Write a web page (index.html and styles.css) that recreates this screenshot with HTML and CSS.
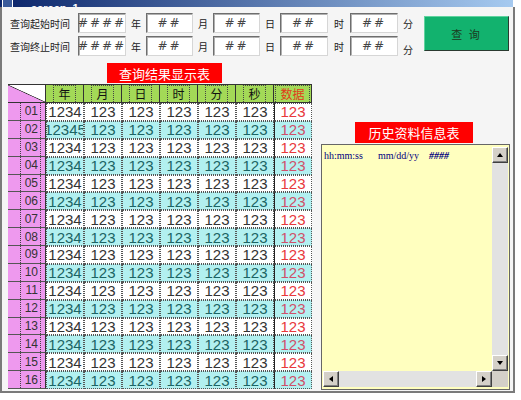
FILE: index.html
```html
<!DOCTYPE html>
<html>
<head>
<meta charset="utf-8">
<link rel="stylesheet" href="styles.css">
</head>
<body>
<div class="titlebar"><span class="ticon"></span><span class="ttext">screen_1</span></div>
<div class="window">
  <div class="top">
    <div class="form">
      <div class="frow"><span class="lbl">查询起始时间</span><span class="inp w48">####</span><span class="unit">年</span><span class="inp w47">##</span><span class="unit">月</span><span class="inp w47">##</span><span class="unit">日</span><span class="inp w48">##</span><span class="unit u22">时</span><span class="inp w48">##</span><span class="unit">分</span></div>
      <div class="frow"><span class="lbl">查询终止时间</span><span class="inp w48">####</span><span class="unit">年</span><span class="inp w47">##</span><span class="unit">月</span><span class="inp w47">##</span><span class="unit">日</span><span class="inp w48">##</span><span class="unit u22">时</span><span class="inp w48">##</span><span class="unit low">分</span></div>
    </div>
    <div class="btn">查&nbsp;询</div>
  </div>
  <div class="main">
    <div class="left">
      <div class="redlbl t1">查询结果显示表</div>
      <div class="grid">
        <div class="corner"></div><div class="h"><span>年</span></div><div class="h"><span>月</span></div><div class="h"><span>日</span></div><div class="h"><span>时</span></div><div class="h"><span>分</span></div><div class="h"><span>秒</span></div><div class="h d"><span>数据</span></div>
        <div class="row"><div class="rh"><span>01</span></div><div class="c">1234</div><div class="c">123</div><div class="c">123</div><div class="c">123</div><div class="c">123</div><div class="c">123</div><div class="c d">123</div></div>
        <div class="row even"><div class="rh"><span>02</span></div><div class="c">12345</div><div class="c">123</div><div class="c">123</div><div class="c">123</div><div class="c">123</div><div class="c">123</div><div class="c d">123</div></div>
        <div class="row"><div class="rh"><span>03</span></div><div class="c">1234</div><div class="c">123</div><div class="c">123</div><div class="c">123</div><div class="c">123</div><div class="c">123</div><div class="c d">123</div></div>
        <div class="row even"><div class="rh"><span>04</span></div><div class="c">1234</div><div class="c">123</div><div class="c">123</div><div class="c">123</div><div class="c">123</div><div class="c">123</div><div class="c d">123</div></div>
        <div class="row"><div class="rh"><span>05</span></div><div class="c">1234</div><div class="c">123</div><div class="c">123</div><div class="c">123</div><div class="c">123</div><div class="c">123</div><div class="c d">123</div></div>
        <div class="row even"><div class="rh"><span>06</span></div><div class="c">1234</div><div class="c">123</div><div class="c">123</div><div class="c">123</div><div class="c">123</div><div class="c">123</div><div class="c d">123</div></div>
        <div class="row"><div class="rh"><span>07</span></div><div class="c">1234</div><div class="c">123</div><div class="c">123</div><div class="c">123</div><div class="c">123</div><div class="c">123</div><div class="c d">123</div></div>
        <div class="row even"><div class="rh"><span>08</span></div><div class="c">1234</div><div class="c">123</div><div class="c">123</div><div class="c">123</div><div class="c">123</div><div class="c">123</div><div class="c d">123</div></div>
        <div class="row"><div class="rh"><span>09</span></div><div class="c">1234</div><div class="c">123</div><div class="c">123</div><div class="c">123</div><div class="c">123</div><div class="c">123</div><div class="c d">123</div></div>
        <div class="row even"><div class="rh"><span>10</span></div><div class="c">1234</div><div class="c">123</div><div class="c">123</div><div class="c">123</div><div class="c">123</div><div class="c">123</div><div class="c d">123</div></div>
        <div class="row"><div class="rh"><span>11</span></div><div class="c">1234</div><div class="c">123</div><div class="c">123</div><div class="c">123</div><div class="c">123</div><div class="c">123</div><div class="c d">123</div></div>
        <div class="row even"><div class="rh"><span>12</span></div><div class="c">1234</div><div class="c">123</div><div class="c">123</div><div class="c">123</div><div class="c">123</div><div class="c">123</div><div class="c d">123</div></div>
        <div class="row"><div class="rh"><span>13</span></div><div class="c">1234</div><div class="c">123</div><div class="c">123</div><div class="c">123</div><div class="c">123</div><div class="c">123</div><div class="c d">123</div></div>
        <div class="row even"><div class="rh"><span>14</span></div><div class="c">1234</div><div class="c">123</div><div class="c">123</div><div class="c">123</div><div class="c">123</div><div class="c">123</div><div class="c d">123</div></div>
        <div class="row"><div class="rh"><span>15</span></div><div class="c">1234</div><div class="c">123</div><div class="c">123</div><div class="c">123</div><div class="c">123</div><div class="c">123</div><div class="c d">123</div></div>
        <div class="row even"><div class="rh"><span>16</span></div><div class="c">1234</div><div class="c">123</div><div class="c">123</div><div class="c">123</div><div class="c">123</div><div class="c">123</div><div class="c d">123</div></div>
      </div>
    </div>
    <div class="right">
      <div class="redlbl t2">历史资料信息表</div>
      <div class="hist">
        <div class="htext"><span class="s1">hh:mm:ss</span><span class="s2">mm/dd/yy</span><span class="s3">####</span></div>
        <div class="vbar"><div class="sbtn"><i class="ar up"></i></div><div class="track"></div><div class="sbtn"><i class="ar down"></i></div></div>
        <div class="hbar"><div class="sbtn"><i class="ar lf"></i></div><div class="track"></div><div class="sbtn"><i class="ar rt"></i></div></div>
        <div class="scorner"></div>
      </div>
    </div>
  </div>
</div>
</body>
</html>
```
FILE: styles.css
```css
html, body {
  margin: 0;
  padding: 0;
  background: #ffffff;
}
body {
  width: 521px;
  height: 400px;
  overflow: hidden;
  font-family: "Noto Sans CJK SC", "Liberation Sans", sans-serif;
}
.titlebar {
  width: 513px;
  height: 7px;
  background: linear-gradient(to right, #0a246a, #a6caf0);
  display: flex;
  align-items: flex-end;
  overflow: hidden;
}
.ticon {
  width: 9px;
  height: 12px;
  margin-left: 2px;
  margin-bottom: -6px;
  flex: none;
  border: 1px solid #ffffff;
  background: #3a5a9a;
}
.ttext {
  margin-left: 18px;
  margin-bottom: -7px;
  font: bold 11px/12px "Liberation Sans", sans-serif;
  color: #ffffff;
  flex: none;
}
.window {
  width: 511px;
  height: 384px;
  border-left: 2px solid #7a7a7a;
  border-right: 2px solid #7a7a7a;
  border-bottom: 2px solid #7a7a7a;
  background: #f5f5f5;
}
.top {
  display: flex;
  padding: 6px 0 0 8px;
}
.form {
  display: flex;
  flex-direction: column;
  gap: 3px;
}
.frow {
  display: flex;
  align-items: center;
  height: 20px;
}
.lbl {
  width: 68px;
  font-size: 10px;
  color: #222;
}
.inp {
  box-sizing: border-box;
  height: 20px;
  background: #ffffff;
  border-style: solid;
  border-width: 1px;
  border-color: #6e6e6e #d6d6d6 #d6d6d6 #6e6e6e;
  box-shadow: inset 1px 1px 0 #b0b0b0;
  display: flex;
  align-items: center;
  justify-content: center;
  font: italic 12px "DejaVu Sans", sans-serif;
  letter-spacing: 2px;
  color: #444;
}
.w47 { width: 47px; }
.w48 { width: 48px; }
.unit {
  width: 20px;
  text-align: center;
  font-size: 10px;
  color: #222;
}
.u22 { width: 22px; }
.low { padding-top: 6px; }
.btn {
  box-sizing: border-box;
  margin-left: 6px;
  margin-top: 3px;
  width: 85px;
  height: 35px;
  background: #12b26e;
  border: 1px solid;
  border-color: #5fd39f #2a3a30 #2a3a30 #5fd39f;
  display: flex;
  align-items: center;
  justify-content: center;
  font-size: 11px;
  color: #1c3a20;
  letter-spacing: 2px;
}
.main {
  display: flex;
  gap: 9px;
  padding: 7px 0 0 6px;
}
.left {
  width: 304px;
}
.redlbl {
  background: #ff0000;
  color: #ffffff;
  font-size: 13px;
  display: flex;
  align-items: center;
  justify-content: center;
}
.t1 {
  width: 115px;
  height: 20px;
  margin-left: 99px;
}
.grid {
  margin-top: 1px;
  display: grid;
  grid-template-columns: repeat(8, 38px);
  grid-template-rows: 19px repeat(16, 17.875px);
}
.row {
  display: contents;
}
.corner {
  box-sizing: border-box;
  border-top: 1px solid #333;
  border-right: 1px solid #333;
  border-bottom: 1px solid #333;
  background: linear-gradient(to top right, #ee99ee calc(50% - 0.7px), #333 50%, #ffffff calc(50% + 0.7px));
}
.h {
  box-sizing: border-box;
  background: #a3d957;
  border-top: 1px solid #333;
  border-right: 1px solid #333;
  border-bottom: 1px solid #333;
  display: flex;
  justify-content: center;
  font-size: 12px;
  color: #111;
}
.h span {
  border-left: 1px dotted #444;
  border-right: 1px dotted #444;
  border-top: 1px dotted #444;
  padding: 0 4px;
  display: flex;
  align-items: center;
  line-height: 1;
}
.h.d span {
  color: #e23a1a;
}
.rh {
  box-sizing: border-box;
  background: #ee99ee;
  border-right: 1px solid #333;
  border-bottom: 1px solid #555;
  display: flex;
  justify-content: flex-end;
  padding-right: 4px;
}
.rh span {
  width: 17px;
  border-left: 1px dotted #444;
  border-right: 1px dotted #444;
  display: flex;
  align-items: center;
  justify-content: flex-end;
  padding-right: 2px;
  font: 12px "Liberation Sans", sans-serif;
  color: #333;
}
.c {
  box-sizing: border-box;
  border: 1px dotted #555;
  background: #ffffff;
  display: flex;
  align-items: center;
  justify-content: center;
  overflow: hidden;
  white-space: nowrap;
  font: 15px/1 "Liberation Sans", sans-serif;
  color: #333;
}
.even .c {
  background: #b2f0f0;
  color: #1c6464;
}
.c.d {
  color: #e8383c;
  border-left: 1px solid #222;
}
.even .c.d {
  color: #d0506a;
}
.right {
  width: 189px;
}
.t2 {
  width: 118px;
  height: 21px;
  margin: 59px 0 0 34px;
}
.hist {
  box-sizing: border-box;
  margin-top: 1px;
  height: 246px;
  border: 1px solid #666;
  padding: 2px 1px;
  background: #ffffbf;
  display: grid;
  grid-template-columns: 1fr 16px;
  grid-template-rows: 1fr 16px;
}
.htext {
  font: 10px "Liberation Serif", serif;
  color: #000080;
  padding: 3px 0 0 1px;
  white-space: nowrap;
}
.s2 { margin-left: 15px; }
.s3 { margin-left: 10px; font-style: italic; font-weight: bold; }
.vbar {
  display: flex;
  flex-direction: column;
  background: #e2e2e2;
}
.hbar {
  display: flex;
  background: #e2e2e2;
}
.track {
  flex: 1;
}
.sbtn {
  box-sizing: border-box;
  width: 16px;
  height: 16px;
  flex: none;
  background: #d4d0c8;
  border: 1px solid;
  border-color: #ffffff #404040 #404040 #ffffff;
  box-shadow: inset -1px -1px 0 #808080;
  display: flex;
  align-items: center;
  justify-content: center;
}
.scorner {
  background: #d4d0c8;
}
.ar {
  width: 0;
  height: 0;
  display: block;
}
.up {
  border-left: 3.5px solid transparent;
  border-right: 3.5px solid transparent;
  border-bottom: 4px solid #000;
}
.down {
  border-left: 3.5px solid transparent;
  border-right: 3.5px solid transparent;
  border-top: 4px solid #000;
}
.lf {
  border-top: 3.5px solid transparent;
  border-bottom: 3.5px solid transparent;
  border-right: 4px solid #000;
}
.rt {
  border-top: 3.5px solid transparent;
  border-bottom: 3.5px solid transparent;
  border-left: 4px solid #000;
}
```
